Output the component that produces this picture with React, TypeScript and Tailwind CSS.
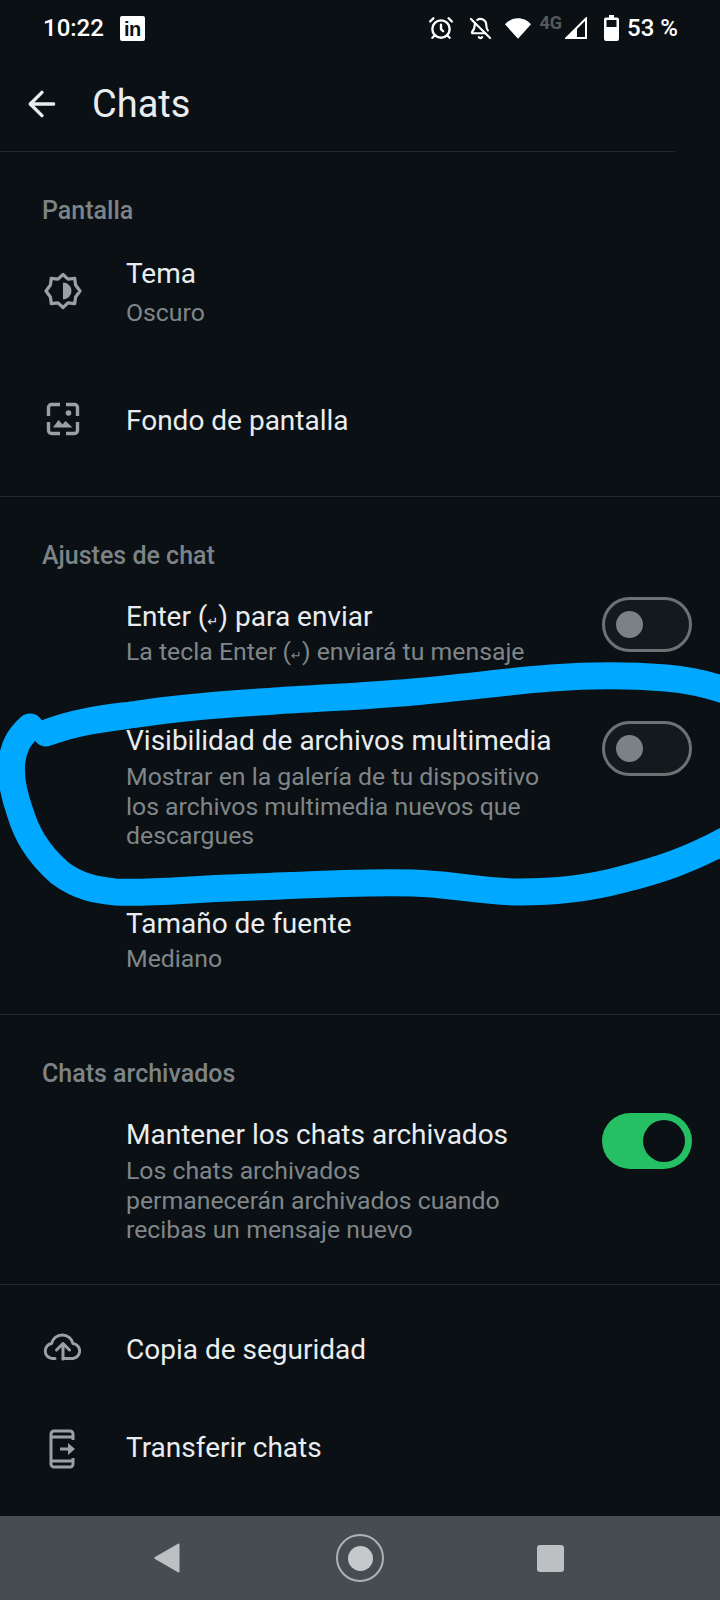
import { ReactNode } from 'react';
import { AlarmClock, ArrowLeft, BellOff } from 'lucide-react';

function BadgeIcon() {
  return (
    <svg width="38" height="38" viewBox="0 0 38 38" fill="none" stroke="#9aa0a3" strokeWidth="3.200" strokeLinejoin="round">
      <path d="M19 2.500l5 4.600 6.700-.8.900 6.700L36 19l-4.400 6-.9 6.700-6.700-.8-5 4.600-5-4.600-6.700.8-.9-6.700L2 19l4.400-6 .9-6.700 6.700.8z" />
      <path d="M19 10.500a8.500 8.500 0 0 1 0 17z" fill="#9aa0a3" stroke="none" />
    </svg>
  );
}

function WallpaperIcon() {
  return (
    <svg width="34" height="34" viewBox="0 0 34 34" fill="none" stroke="#9aa0a3" strokeWidth="3.400">
      <path d="M14 2.500H5.500a3 3 0 0 0-3 3V14M20 2.500h8.500a3 3 0 0 1 3 3V14M14 31.500H5.500a3 3 0 0 1-3-3V20M20 31.500h8.500a3 3 0 0 0 3-3V20" />
      <circle cx="22.500" cy="11" r="2.800" fill="#9aa0a3" stroke="none" />
      <path d="M7 25.500l5.500-7.500 4 4.500 3-3.500 7 6.500z" fill="#9aa0a3" stroke="none" />
    </svg>
  );
}

function CloudIcon() {
  return (
    <svg width="40" height="30" viewBox="0 0 40 30" fill="none" stroke="#9aa0a3" strokeWidth="3" strokeLinecap="round" strokeLinejoin="round">
      <path d="M12 27.500H9.500a7.500 7.500 0 0 1-1-14.900 11 11 0 0 1 21.500 0 7.500 7.500 0 0 1 0 14.900H20" />
      <path d="M20 28V13M13.500 19l6.500-6.500 6.500 6.500" />
    </svg>
  );
}

function PhoneIcon() {
  return (
    <svg width="28" height="40" viewBox="0 0 28 40" fill="none" stroke="#9aa0a3" strokeWidth="3" strokeLinejoin="round">
      <path d="M24 11V5a3 3 0 0 0-3-3H5a3 3 0 0 0-3 3v30a3 3 0 0 0 3 3h16a3 3 0 0 0 3-3v-6" />
      <path d="M2 8h22M2 32h22" />
      <path d="M11 20h12" />
      <path d="M19 14l7 6-7 6z" fill="#9aa0a3" stroke="none" />
    </svg>
  );
}

function Toggle({ on = false, className = '' }: { on?: boolean; className?: string }) {
  if (on) {
    return (
      <div className={`flex h-[56px] w-[90px] shrink-0 items-center justify-end rounded-full bg-[#25c064] pr-[7px] ${className}`}>
        <div className="h-[42px] w-[42px] rounded-full bg-[#0b1014]" />
      </div>
    );
  }
  return (
    <div className={`flex h-[55px] w-[90px] shrink-0 items-center rounded-full border-[3px] border-[#6d7174] bg-[#14191d] pl-[11px] ${className}`}>
      <div className="h-[27px] w-[27px] rounded-full bg-[#7c8185]" />
    </div>
  );
}

function EnterGlyph() {
  return <span className="font-['DejaVu_Sans',sans-serif] text-[13px]">↵</span>;
}

function Row({ title, sub, icon, right, className = '' }: { title: ReactNode; sub?: ReactNode; icon?: ReactNode; right?: ReactNode; className?: string }) {
  return (
    <div className={`flex items-start ${className}`}>
      <div className={`flex w-[126px] shrink-0 justify-center ${sub ? 'mt-[17px]' : ''}`}>{icon}</div>
      <div className="min-w-0 flex-1">
        <div className="h-9 text-[28px] leading-[38px] whitespace-nowrap text-[#e9edef]">{title}</div>
        {sub}
      </div>
      {right}
    </div>
  );
}

function Sub({ children, className = '' }: { children: ReactNode; className?: string }) {
  return <div className={`text-[24.800px] leading-[29.500px] whitespace-nowrap text-[#7f8689] ${className}`}>{children}</div>;
}

function SectionTitle({ children }: { children: ReactNode }) {
  return <div className="h-7 pl-[42px] text-[25px] leading-[31px] font-medium text-[#7d8487]">{children}</div>;
}

function Divider() {
  return <div className="h-px bg-[#22282c]" />;
}

export default function App() {
  return (
    <div className="relative flex h-[1600px] w-[720px] flex-col overflow-hidden bg-[#0b1014] font-['Roboto',sans-serif]">
      {/* status bar */}
      <div className="flex h-[56px] items-center pl-[43px] pr-[42px] text-white">
        <span className="text-[24px] font-medium">10:22</span>
        <div className="ml-[16px] flex h-[25px] w-[25px] items-end justify-center rounded-[2px] bg-white pb-[1px] font-['Liberation_Sans',sans-serif] text-[20px] leading-[22px] font-bold tracking-[-0.5px] text-[#0b1014]">in</div>
        <div className="ml-auto flex items-center">
          <AlarmClock size={26} strokeWidth={2.2} />
          <BellOff size={23} strokeWidth={2.2} className="ml-[15px]" />
          <svg width="26" height="21" viewBox="0 0 28 22" className="ml-[13px]" fill="#fff">
            <path d="M14 22L0 6.500C3.500 2.500 8.500 0 14 0s10.500 2.500 14 6.500z" />
          </svg>
          <span className="-mt-[12px] ml-[8px] text-[18px] font-bold text-[#55595c]">4G</span>
          <svg width="22" height="22" viewBox="0 0 22 22" className="ml-[3px]" fill="none">
            <path d="M21 1.500V21H1.500z" stroke="#fff" strokeWidth="2" />
            <path d="M12 11L1.500 21H12z" fill="#fff" />
          </svg>
          <svg width="15" height="26" viewBox="0 0 15 26" className="ml-[17px]">
            <path d="M5 0h5v2.500h3a2 2 0 0 1 2 2V24a2 2 0 0 1-2 2H2a2 2 0 0 1-2-2V4.500a2 2 0 0 1 2-2h3z" fill="#fff" />
            <rect x="2.500" y="5" width="10" height="7" fill="#0b1014" />
          </svg>
          <span className="ml-[8px] text-[24px] font-medium">53 %</span>
        </div>
      </div>

      {/* header */}
      <div className="flex h-[95px] items-center pl-[22px]">
        <ArrowLeft size={40} strokeWidth={2} className="text-[#e9edef]" />
        <span className="ml-[30px] pt-[2px] text-[38px] text-[#e9edef]">Chats</span>
      </div>
      <div className="h-px w-[675px] bg-[#22282c]" />

      {/* pantalla */}
      <div className="pt-[43px]">
        <SectionTitle>Pantalla</SectionTitle>
        <Row
          className="mt-[32px]"
          icon={<BadgeIcon />}
          title="Tema"
          sub={<Sub className="mt-[7px]">Oscuro</Sub>}
        />
        <Row className="mt-[74px]" icon={<WallpaperIcon />} title="Fondo de pantalla" />
      </div>
      <div className="mt-[58px]">
        <Divider />
      </div>

      {/* ajustes de chat */}
      <div className="pt-[43px]">
        <SectionTitle>Ajustes de chat</SectionTitle>
        <Row
          className="mt-[30px] pr-[28px]"
          title={<>Enter (<EnterGlyph />) para enviar</>}
          sub={<Sub className="mt-[3px]">La tecla Enter (<EnterGlyph />) enviará tu mensaje</Sub>}
          right={<Toggle className="-mt-[1px]" />}
        />
        <Row
          className="mt-[52px] pr-[28px]"
          title="Visibilidad de archivos multimedia"
          sub={
            <Sub className="mt-[4px]">
              Mostrar en la galería de tu dispositivo
              <br />
              los archivos multimedia nuevos que
              <br />
              descargues
            </Sub>
          }
          right={<Toggle className="-mt-[1px]" />}
        />
        <Row
          className="mt-[54px]"
          title="Tamaño de fuente"
          sub={<Sub className="mt-[3px]">Mediano</Sub>}
        />
      </div>
      <div className="mt-[41px]">
        <Divider />
      </div>

      {/* chats archivados */}
      <div className="pt-[43px]">
        <SectionTitle>Chats archivados</SectionTitle>
        <Row
          className="mt-[30px] pr-[28px]"
          title="Mantener los chats archivados"
          sub={
            <Sub className="mt-[4px]">
              Los chats archivados
              <br />
              permanecerán archivados cuando
              <br />
              recibas un mensaje nuevo
            </Sub>
          }
          right={<Toggle on className="-mt-[3px]" />}
        />
      </div>
      <div className="mt-[39px]">
        <Divider />
      </div>

      {/* copia / transferir */}
      <div className="pt-[46px]">
        <Row icon={<CloudIcon />} title="Copia de seguridad" />
        <Row className="mt-[62px]" icon={<PhoneIcon />} title="Transferir chats" />
      </div>

      {/* nav bar */}
      <div className="mt-auto flex h-[84px] items-center bg-[#454d51] pl-[154px]">
        <svg width="26" height="30" viewBox="0 0 26 30" fill="#bcc0c2">
          <path d="M25.500 1.500v27a1 1 0 0 1-1.500.8L1 16a1.200 1.200 0 0 1 0-2L24 .700a1 1 0 0 1 1.500.8z" />
        </svg>
        <div className="ml-[156px] flex h-[48px] w-[48px] items-center justify-center rounded-full border-[2.500px] border-[#aeb2b4]">
          <div className="h-[25px] w-[25px] rounded-full bg-[#c6c9cb]" />
        </div>
        <div className="ml-[153px] h-[27px] w-[27px] rounded-[3px] bg-[#bcc0c2]" />
      </div>

      {/* hand drawn highlight on top of the screenshot */}
      <svg className="pointer-events-none absolute top-0 left-0" width="720" height="1600" viewBox="0 0 720 1600" fill="none">
        <path
          d="M46 733C80 720 110 718 138 714C190 706 230 704 275 701C320 698 370 696 413 692C460 688 510 681 551 678C590 675 630 675 666 678C690 680 708 684 730 692"
          stroke="#00a9ff"
          strokeWidth="27"
          strokeLinecap="round"
        />
        <path
          d="M30 727C18 738 14 747 12 760C10 775 14 795 20 812C26 832 36 852 60 873C80 888 98 890 115 892C150 894 190 889 230 888C290 886 360 881 413 883C450 884 485 892 519 892C555 892 590 888 620 880C660 870 690 860 730 838"
          stroke="#00a9ff"
          strokeWidth="27"
          strokeLinecap="round"
        />
      </svg>
    </div>
  );
}
